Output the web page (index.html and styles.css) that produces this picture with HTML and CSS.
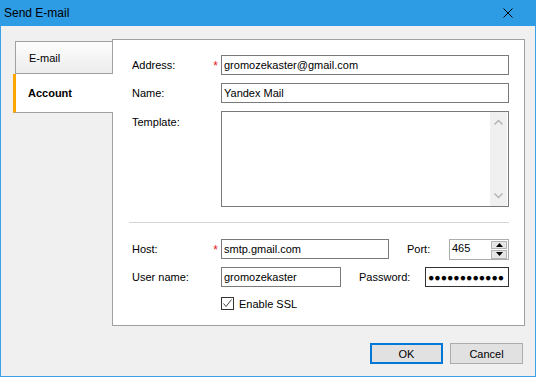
FILE: index.html
```html
<!DOCTYPE html>
<html lang="en">
<head>
  <meta charset="UTF-8" />
  <title>Send E-mail</title>
  <link rel="stylesheet" href="styles.css">
</head>
<body>
  <div class="window">
    <!-- title bar -->
    <div class="titlebar">
      <span class="title">Send E-mail</span>
      <svg class="close" width="10" height="10" viewBox="0 0 10 10">
        <path d="M0.5 0.5 L9.5 9.5 M9.5 0.5 L0.5 9.5" stroke="#000" stroke-width="1" fill="none"/>
      </svg>
    </div>

    <div class="body">
      <div class="main">
        <!-- tabs -->
        <div class="tabs">
          <div class="tab">E-mail</div>
          <div class="tab tab-active">Account</div>
        </div>

        <!-- account page -->
        <div class="panel">
          <div class="row">
            <label class="label">Address:<span class="req">*</span></label>
            <input class="field field-wide" type="text" value="gromozekaster@gmail.com">
          </div>
          <div class="row">
            <label class="label">Name:</label>
            <input class="field field-wide" type="text" value="Yandex Mail">
          </div>
          <div class="row row-template">
            <label class="label label-top">Template:</label>
            <div class="textarea">
              <div class="scrollbar">
                <svg width="17" height="94" viewBox="0 0 17 94">
                  <path d="M4.5 12.5 L8.5 8.5 L12.5 12.5" stroke="#b4b4b4" stroke-width="1.5" fill="none"/>
                  <path d="M4.5 81.5 L8.5 85.5 L12.5 81.5" stroke="#b4b4b4" stroke-width="1.5" fill="none"/>
                </svg>
              </div>
            </div>
          </div>

          <div class="sep"></div>

          <div class="row">
            <label class="label">Host:<span class="req">*</span></label>
            <input class="field field-host" type="text" value="smtp.gmail.com">
            <label class="label-mid label-port">Port:</label>
            <div class="spin">
              <span class="spin-value">465</span>
              <div class="spin-buttons">
                <div class="spin-btn">
                  <svg width="7" height="4" viewBox="0 0 7 4"><path d="M0 4 L3.5 0 L7 4 Z" fill="#000"/></svg>
                </div>
                <div class="spin-btn">
                  <svg width="7" height="4" viewBox="0 0 7 4"><path d="M0 0 L3.5 4 L7 0 Z" fill="#000"/></svg>
                </div>
              </div>
            </div>
          </div>
          <div class="row">
            <label class="label">User name:</label>
            <input class="field field-user" type="text" value="gromozekaster">
            <label class="label-mid label-pass">Password:</label>
            <div class="field field-pass">●●●●●●●●●●●●</div>
          </div>
          <div class="check-row">
            <span class="checkbox">
              <svg width="11" height="11" viewBox="0 0 11 11">
                <path d="M1.5 5.5 L4 8.5 L9.5 1.5" stroke="#444" stroke-width="1" fill="none"/>
              </svg>
            </span>
            <span>Enable SSL</span>
          </div>
        </div>
      </div>

      <!-- dialog buttons -->
      <div class="buttons">
        <button class="btn btn-default">OK</button>
        <button class="btn">Cancel</button>
      </div>
    </div>
  </div>
</body>
</html>
```

FILE: styles.css
```css
body {
  margin: 0;
  font-family: "Liberation Sans", Arial, sans-serif;
  font-size: 11px;
  color: #000;
}
.window {
  width: 536px;
  height: 377px;
  display: flex;
  flex-direction: column;
}
.titlebar {
  height: 26px;
  background-color: #2e9be5;
  display: flex;
  align-items: center;
  justify-content: space-between;
  padding: 0 23px 0 4px;
  box-sizing: border-box;
}
.title {
  font-size: 12px;
}
.close {
  display: block;
}
.body {
  flex: 1;
  background-color: #f0f0f0;
  border: 1px solid #3aa0e8;
  border-top: none;
}
.main {
  display: flex;
  padding: 13px 0 0 12px;
}
.tabs {
  width: 99px;
  padding-top: 2px;
}
.tab {
  box-sizing: border-box;
  height: 33px;
  margin-left: 2px;
  padding-left: 13px;
  display: flex;
  align-items: center;
  border: 1px solid #a0a0a0;
  border-right: none;
  background: linear-gradient(#fdfdfd, #ececec);
}
.tab-active {
  position: relative;
  z-index: 1;
  height: 39px;
  margin-left: 0;
  margin-right: -1px;
  padding-left: 12px;
  border-top: none;
  border-left: 3px solid #ffa500;
  background: #fff;
  font-weight: bold;
}
.panel {
  box-sizing: border-box;
  width: 413px;
  height: 287px;
  background-color: #fff;
  border: 1px solid #a0a0a0;
  padding: 15px 15px 0 19px;
}
.row {
  display: flex;
  align-items: center;
  height: 20px;
  margin-bottom: 8px;
}
.row-template {
  align-items: flex-start;
  height: 96px;
  margin-bottom: 0;
}
.label {
  width: 89px;
  box-sizing: border-box;
  padding-right: 3px;
  display: flex;
  justify-content: space-between;
  align-self: stretch;
  align-items: center;
}
.label-top {
  align-self: flex-start;
  padding-top: 5px;
}
.req {
  color: #e02020;
  font-size: 12px;
  margin-top: 2px;
}
.field {
  box-sizing: border-box;
  height: 20px;
  border: 1px solid #7a7a7a;
  padding: 0 2px;
  margin: 0;
  font-family: inherit;
  font-size: 11px;
  color: #000;
  background: #fff;
  outline: none;
}
.field-wide {
  width: 288px;
}
.field-host {
  width: 168px;
}
.field-user {
  width: 120px;
}
.field-pass {
  width: 84px;
  border-color: #333;
  display: flex;
  align-items: center;
  font-size: 10.5px;
  overflow: hidden;
  white-space: nowrap;
}
.label-mid {
  box-sizing: border-box;
  padding-left: 18px;
}
.label-port {
  width: 60px;
}
.label-pass {
  width: 84px;
}
.textarea {
  box-sizing: border-box;
  width: 288px;
  height: 96px;
  border: 1px solid #7a7a7a;
  display: flex;
  justify-content: flex-end;
  padding: 0 1px 0 0;
}
.scrollbar {
  width: 17px;
  background-color: #f0f0f0;
}
.scrollbar svg {
  display: block;
}
.sep {
  height: 1px;
  background-color: #d4d4d4;
  margin: 15px 0 16px -3px;
}
.spin {
  box-sizing: border-box;
  width: 60px;
  height: 21px;
  border: 1px solid #acacac;
  display: flex;
  justify-content: space-between;
  padding: 0 1px 0 2px;
}
.spin-value {
  padding-top: 2px;
}
.spin-buttons {
  width: 16px;
  display: flex;
  flex-direction: column;
  justify-content: center;
}
.spin-btn {
  height: 8px;
  margin-top: 1px;
  background-color: #e6e6e6;
  border: 1px solid #b4b4b4;
  display: flex;
  align-items: center;
  justify-content: center;
}
.spin-btn svg {
  display: block;
}
.check-row {
  display: flex;
  align-items: center;
  margin: 10px 0 0 89px;
  height: 13px;
}
.checkbox {
  box-sizing: border-box;
  width: 13px;
  height: 13px;
  border: 1px solid #333;
  background: #fff;
  margin-right: 5px;
}
.checkbox svg {
  display: block;
}
.buttons {
  display: flex;
  justify-content: flex-end;
  gap: 7px;
  padding: 17px 12px 0 0;
}
.btn {
  box-sizing: border-box;
  width: 73px;
  height: 21px;
  background-color: #e1e1e1;
  border: 1px solid #adadad;
  font-family: inherit;
  font-size: 11px;
  color: #000;
  padding: 0;
}
.btn-default {
  border: 2px solid #0078d7;
}
```
